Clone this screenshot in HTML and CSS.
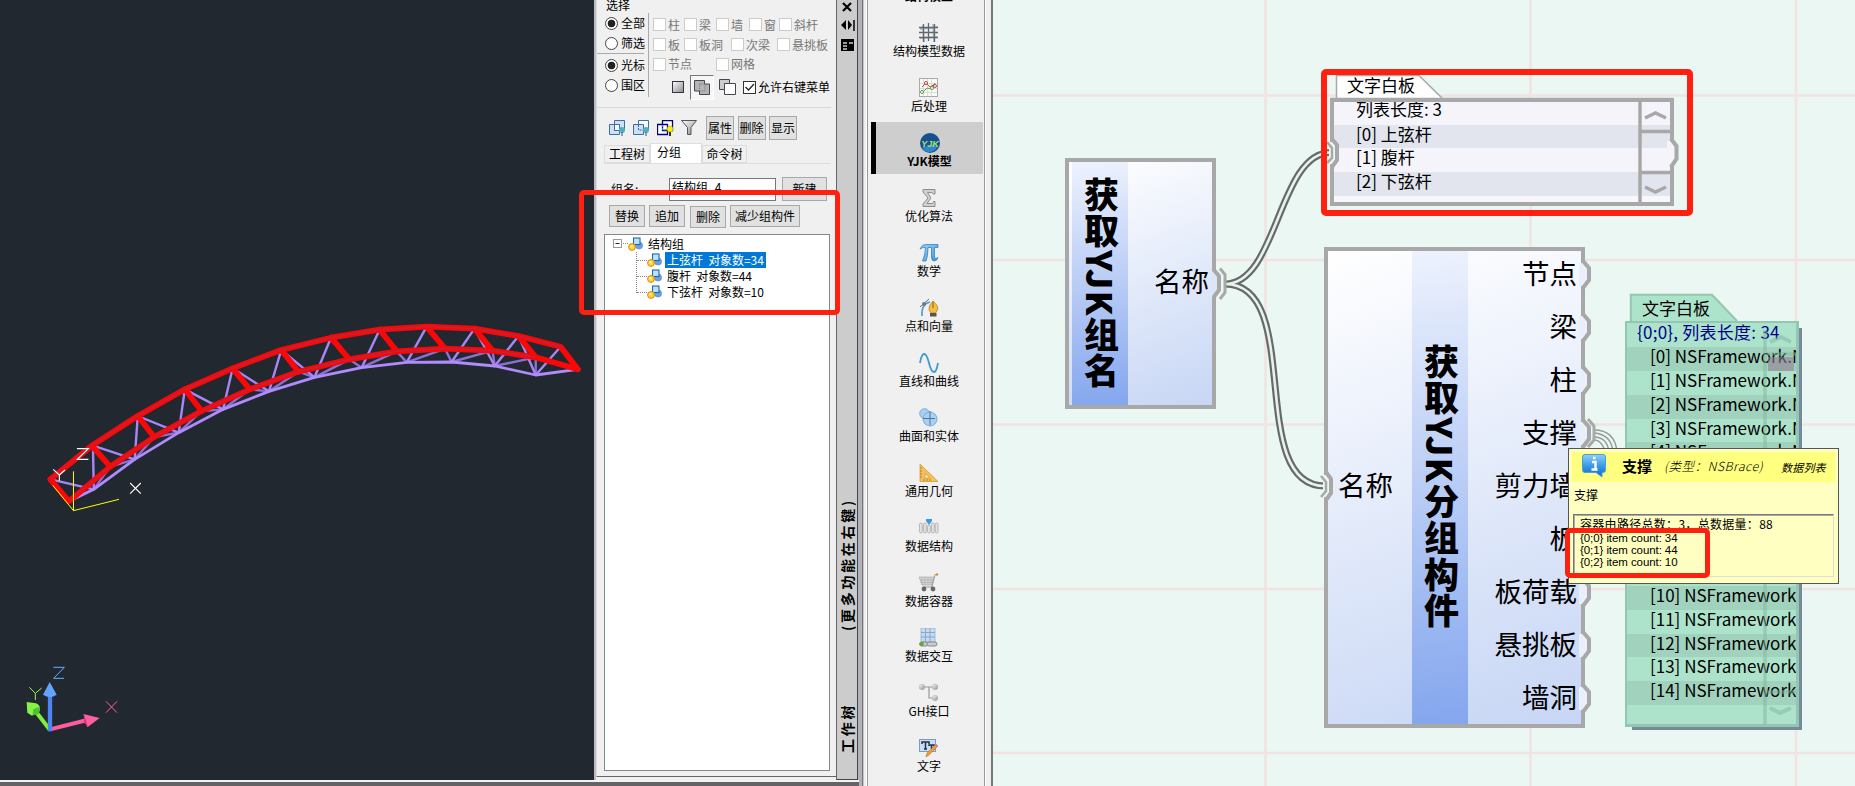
FILE: index.html
```html
<!DOCTYPE html>
<html lang="zh-CN">
<head>
<meta charset="utf-8">
<title>YJK</title>
<link rel="stylesheet" href="styles.css">
</head>
<body>
<svg width="0" height="0" class="defs">
  <defs>
    <linearGradient id="gBlue" x1="0" y1="0" x2="1" y2="1"><stop offset="0" stop-color="#a9d4f5"/><stop offset="1" stop-color="#3d8fd6"/></linearGradient>
    <linearGradient id="gGray" x1="0" y1="0" x2="1" y2="1"><stop offset="0" stop-color="#fff"/><stop offset="1" stop-color="#8a8a8a"/></linearGradient>
    <linearGradient id="gTip" x1="0" y1="0" x2="0" y2="1"><stop offset="0" stop-color="#8fd0f7"/><stop offset=".5" stop-color="#3a9be6"/><stop offset="1" stop-color="#1268c4"/></linearGradient>
    <symbol id="cube" viewBox="0 0 16 15">
      <circle cx="11" cy="8.500" r="3.600" fill="#6d9fe6" stroke="#4c7fcb" stroke-width=".6"/>
      <rect x="5.500" y="1" width="6.500" height="6.500" fill="#b8e3fa" stroke="#23689c" stroke-width="1.100"/>
      <circle cx="4" cy="10" r="3.400" fill="#ffd42a" stroke="#e2871c" stroke-width="1"/><circle cx="3.500" cy="9.300" r="1.300" fill="#fff3a0"/>
    </symbol>
  </defs>
</svg>
<div class="app">
  <section class="cad">
    <div class="viewport">
      <svg class="truss" width="600" height="240" viewBox="0 0 1568 720" preserveAspectRatio="none">
        <g fill="none" stroke="#a986f5" stroke-width="2.400" stroke-linejoin="round">
          <path stroke="#8c6fd6" d="M180 604L245 568L288 500L352 478L403 411L467 398L527 333L583 328L653 268L703 274L780 215L822 232L913 178L945 203L1037 154L1063 187L1163 146L1180 186L1287 152L1293 198L1400 172L1400 225"/>
          <path d="M132 538L245 568L243 437L352 478L360 348L467 398L483 268L583 328L608 205L703 274L735 150L822 232L865 113M992 89L945 203M1115 80L1063 187M1240 86L1180 186M1240 86L1293 198L1355 108M1355 108L1400 225L1465 140"/>
          <path stroke="#b08cfb" stroke-width="2.800" d="M180 604L245 568L352 478L467 398L583 328L703 274L822 232L945 203L1063 187L1180 186L1293 198L1400 225L1510 208"/>
        </g>
        <g fill="none" stroke="#fb0708" stroke-width="5.700" stroke-linejoin="round" stroke-linecap="round">
          <path d="M132 538L240 437L360 348L483 268L608 205L735 150L865 113L992 89L1115 80L1240 86L1355 108L1465 140L1510 208"/>
          <path d="M132 538L180 604L288 500L403 411L527 333L653 268L780 215L913 178L1037 154L1163 146L1287 152L1400 172L1510 208"/>
          <path d="M240 437L288 500M360 348L403 411M483 268L527 333M608 205L653 268M735 150L780 215M865 113L913 178M992 89L1037 154M1115 80L1163 146M1240 86L1287 152M1355 108L1400 172"/>
        </g>
        <path fill="none" stroke="#94395a" stroke-width=".9" d="M132 538L240 437L360 348L483 268L608 205L735 150L865 113L992 89L1115 80L1240 86L1355 108L1465 140M180 604L288 500L403 411L527 333L653 268L780 215L913 178L1037 154L1163 146L1287 152L1400 172"/>
        <path fill="none" stroke="#ff0" stroke-width="1" d="M192 514V632L311 598M192 632L138 556"/>
        <path fill="none" stroke="#fff" stroke-width="1.100" d="M201 446H231L202 478H231M139 508L155 525L170 510M155 525V542M340 549L368 581M368 549L340 581"/>
      </svg>
      <svg class="axes" width="200" height="140" viewBox="0 0 600 420">
        <path d="M150 268L262 240" stroke="#ff5ba0" stroke-width="12"/><path d="M250 222L299 234L262 262L256 244Z" fill="#ff5fa5"/><path d="M252 222L264 260L252 248Z" fill="#d9366f"/>
        <path d="M150 270L102 208" stroke="#7df03f" stroke-width="12"/><path d="M80 186L108 190Q124 196 118 214L96 227L82 218Z" fill="#86f446"/><path d="M100 208L119 200Q122 214 112 224L98 226Z" fill="#4fbf35"/>
        <path d="M150 274V160" stroke="#4c86f2" stroke-width="13"/><path d="M149 126L170 164Q150 178 129 164Z" fill="#62a4fb"/>
        <g fill="none" stroke-width="3"><path stroke="#63b1ff" d="M160 82H193L161 115H192"/><path stroke="#a4f04f" d="M88 142L106 160L125 144M106 160V180"/><path stroke="#ff5fa5" d="M318 184L351 218M351 184L318 218"/></g>
      </svg>
    </div>
    <div class="cadfoot"></div>
  </section>

  <aside class="panel">
    <div class="inner">
      <div class="legend"><span>选择</span></div>
      <div class="select">
        <div class="radios">
          <label class="radio"><i class="dot on"></i>全部</label>
          <label class="radio"><i class="dot"></i>筛选</label>
          <hr>
          <label class="radio"><i class="dot on"></i>光标</label>
          <label class="radio"><i class="dot"></i>围区</label>
        </div>
        <div class="checks">
          <div class="crow"><label class="w31"><i></i>柱</label><label class="w32"><i></i>梁</label><label class="w33"><i></i>墙</label><label class="w30"><i></i>窗</label><label><i></i>斜杆</label></div>
          <div class="crow"><label class="w31"><i></i>板</label><label class="w47"><i></i>板洞</label><label class="w46"><i></i>次梁</label><label><i></i>悬挑板</label></div>
          <div class="crow"><label class="w63"><i></i>节点</label><label><i></i>网格</label></div>
          <div class="modes">
            <svg width="12" height="12"><rect x=".5" y=".5" width="11" height="11" fill="url(#gGray)" stroke="#334"/></svg>
            <span class="pressed"><svg width="16" height="15"><path d="M.5.5h10v3.500h5v10.500h-10v-3.500h-5z" fill="#b4b4b4" stroke="#445"/><path d="M5.500 4v7H11V4z" fill="none" stroke="#777" stroke-dasharray="1 1"/></svg></span>
            <svg width="17" height="16"><path d="M.5.500h10v10h-10z" fill="#ccc" stroke="#445"/><path d="M5.500 4.500h11v11h-11z" fill="#fff" stroke="#445"/></svg>
            <label class="allow"><i><svg width="11" height="11"><path d="M1.500 5L4.500 8L10 2" fill="none" stroke="#222" stroke-width="1.300"/></svg></i>允许右键菜单</label>
          </div>
        </div>
      </div>
      <div class="tools">
        <svg width="17" height="16"><path d="M5.500.5h10v10h-10zM.5 4.500h10v10h-10z" fill="#cfe0f2" stroke="#3a6ea5"/><path d="M5.500 4.500h5v6h-5z" fill="#fff" stroke="#3a6ea5"/><circle cx="13" cy="10" r="3" fill="#4fb0c0"/><path d="M13 12v4" stroke="#447"/></svg>
        <svg width="17" height="16"><path d="M5.500.5h10v10h-10z" fill="#fff" stroke="#3a6ea5"/><path d="M.5 4.500h10v10h-10z" fill="#cfe0f2" stroke="#3a6ea5"/><path d="M5.500 5v5H10" fill="none" stroke="#3a6ea5" stroke-dasharray="2 1"/><circle cx="13" cy="10" r="3" fill="#4fb0c0"/><path d="M13 12v4" stroke="#447"/></svg>
        <svg width="17" height="16"><path d="M5.500.5h10v10h-10zM.5 4.500h10v10h-10z" fill="#fff" stroke="#000080" stroke-width="1.300"/><path d="M5.500 5v5H10" fill="none" stroke="#2a9a9a" stroke-dasharray="2 1"/><circle cx="13" cy="9" r="3" fill="#ffee00" stroke="#a90" stroke-width=".5"/><path d="M13 12v4" stroke="#333" stroke-width="2"/></svg>
        <svg width="17" height="17"><path d="M.5 1.500h15L10 8.500v7H6.500v-7z" fill="url(#gGray)" stroke="#555"/></svg>
        <button>属性</button><button>删除</button><button>显示</button>
      </div>
      <div class="tabs"><span>工程树</span><span class="cur">分组</span><span>命令树</span></div>
      <div class="page">
        <div class="name"><span>组名:</span><b>结构组_4</b><button>新建</button></div>
        <div class="acts"><button>替换</button><button>追加</button><button class="low">删除</button><button class="wide">减少组构件</button></div>
        <div class="tree">
          <div class="node root"><svg width="15" height="10"><rect x=".5" y=".5" width="8" height="8" fill="#fff" stroke="#999"/><path d="M2.500 4.500h4" stroke="#224"/><path d="M10 4.500h5" stroke="#888" stroke-dasharray="1 1"/></svg><svg width="16" height="15"><use href="#cube"/></svg><span>结构组</span></div>
          <div class="kids">
            <div class="node"><i></i><svg width="16" height="15"><use href="#cube"/></svg><span class="sel">上弦杆&nbsp; 对象数=34</span></div>
            <div class="node"><i></i><svg width="16" height="15"><use href="#cube"/></svg><span>腹杆&nbsp; 对象数=44</span></div>
            <div class="node"><i></i><svg width="16" height="15"><use href="#cube"/></svg><span>下弦杆&nbsp; 对象数=10</span></div>
          </div>
        </div>
      </div>
    </div>
  </aside>
  <div class="caption">
    <svg width="20" height="54"><path d="M6 3L14 11M14 3L6 11" stroke="#000" stroke-width="2.200"/><path d="M9 20v10l-5-5zM11 20v10l4-5z"/><path d="M17 20v11" stroke="#000" stroke-width="1.500"/><path d="M4 39h13v12H4z"/><path d="M6 43h4M6 46h4M6 49h4M12 43h4" stroke="#ccc" stroke-width="1.300"/></svg>
    <span class="side more">(更多功能在右键)</span>
    <span class="side work">工作树</span>
  </div>
  <div class="splitter"></div>

  <nav class="side-nav">
    <div class="item"><span class="ico"></span><b>结构模型</b></div>
    <div class="item"><svg class="ico" viewBox="0 0 20 20"><path d="M1 6l18-2M1 15l17-1M14 1l1 18M4 2l1 17" stroke="#6ea5dc" stroke-width="1.500" opacity=".8"/><path d="M0 4.500h19M0 9.500h19M0 14.500h19M4.500 1v18M9.500 0v18M15.500 1v18" stroke="#666" stroke-width="1.300"/></svg><span>结构模型数据</span></div>
    <div class="item"><svg class="ico" viewBox="0 0 20 20"><rect x=".5" y=".5" width="18" height="18" fill="#fafafa" stroke="#aaa"/><path d="M4.500 1v17M8.500 1v17M12.500 1v17M1 5.500h17M1 10.500h17M1 14.500h17" stroke="#ddd"/><path d="M3 9l4-4 4 4 5-3" fill="none" stroke="#c84040"/><path d="M3 15l5-5 5 1 3-6" fill="none" stroke="#58a83c"/><g fill="#fff"><circle cx="7" cy="5" r="1.500" stroke="#c84040"/><circle cx="16" cy="8" r="1.500" stroke="#c84040"/><circle cx="3" cy="14" r="1.500" stroke="#58a83c"/><circle cx="13" cy="10" r="1.500" stroke="#58a83c"/></g></svg><span>后处理</span></div>
    <div class="item active"><svg class="ico" viewBox="0 0 20 20"><circle cx="10" cy="10" r="10" fill="#17508e"/><path d="M2 15Q10 10 18 13Q14 20 8 19Q4 18 2 15Z" fill="#2f86c8"/><text x="10" y="13.500" text-anchor="middle" class="logo">YJK</text></svg><b>YJK模型</b></div>
    <div class="item"><svg class="ico" viewBox="0 0 20 20"><path d="M4 1.500h12v4.500h-2l-1-1.500H8.500L12 10l-4 5.500h5.500l1-2H16V18.500H4V16l5-6L4 4z" fill="#d0d0d0" stroke="#8e8e8e"/></svg><span>优化算法</span></div>
    <div class="item"><svg class="ico" viewBox="0 0 20 20"><path d="M1 6Q3 1 7 1.500H19V4.500H15.500V14Q16 16.500 19 14.500Q18 18 15 18Q12.500 18 12.500 14V4.500H9Q9 13 7 18H3.500Q6.500 11 6.500 4.500Q3.500 4 1 6Z" fill="url(#gBlue)" stroke="#2f86c0" stroke-width=".8"/></svg><span>数学</span></div>
    <div class="item"><svg class="ico" viewBox="0 0 20 20"><path d="M3 18Q2 6 11 4" fill="none" stroke="#479fd6" stroke-width="1.600"/><path d="M1 9L10 1" stroke="#666"/><circle cx="5" cy="6" r="2" fill="#777"/><path d="M14 3Q20 8 18.500 12L16.500 15H12L10 12Q9 8 14 3Z" fill="#f5bd42" stroke="#b8862c" stroke-width=".8"/><path d="M14 4v6" stroke="#865d1b"/><path d="M11 15h6.500v3.500H11z" fill="#555"/></svg><span>点和向量</span></div>
    <div class="item"><svg class="ico" viewBox="0 0 20 20"><path d="M1 10C3-2 7-2 10 10S17 22 19 10" fill="none" stroke="#3f9acb" stroke-width="1.800"/></svg><span>直线和曲线</span></div>
    <div class="item"><svg class="ico" viewBox="0 0 20 20"><circle cx="5.500" cy="5.500" r="4.800" fill="#a9d0f2" stroke="#78acd8"/><circle cx="11" cy="11" r="7" fill="#a9d0f2" stroke="#78acd8"/><path d="M11 3v14M4 10.500h12" stroke="#52779b"/></svg><span>曲面和实体</span></div>
    <div class="item"><svg class="ico" viewBox="0 0 20 20"><path d="M1 1L19 18.500H1zM6 10.500V15H11z" fill="#f3bf5b" fill-rule="evenodd" stroke="#d69a34" stroke-width=".8"/><path d="M1 5h2M1 8h2M1 11h2M1 14h2M5 18v-2M8 18v-2M11 18v-2" stroke="#9a6f25" stroke-width=".7"/></svg><span>通用几何</span></div>
    <div class="item"><svg class="ico" viewBox="0 0 20 20"><g fill="#e3e3e3" stroke="#aaa" stroke-width=".8"><rect x=".5" y="5" width="2.800" height="10" rx="1.400"/><rect x="4.500" y="5" width="2.800" height="10" rx="1.400"/><rect x="8.500" y="7" width="2.800" height="8" rx="1.400"/><rect x="12.500" y="5" width="2.800" height="10" rx="1.400"/><rect x="16.200" y="5" width="2.800" height="10" rx="1.400"/></g><path d="M7 1h6v2l-3 4-3-4z" fill="#379be5"/></svg><span>数据结构</span></div>
    <div class="item"><svg class="ico" viewBox="0 0 20 20"><path d="M0 4h15l-2 8H3z" fill="#d8d8d8" stroke="#aaa" stroke-width=".7"/><path d="M3 4v8M6 4v8M9 4v8M12 4v8M1 7h13M2 9.500h12" stroke="#aaa" stroke-width=".6"/><path d="M18 1.500h-2L13 14H4" fill="none" stroke="#999"/><circle cx="5" cy="16" r="2.400" fill="#666"/><circle cx="14" cy="16" r="2.400" fill="#666"/><circle cx="18" cy="1.500" r="1.200" fill="#d98a2c"/></svg><span>数据容器</span></div>
    <div class="item"><svg class="ico" viewBox="0 0 20 20"><path d="M2 0h14v14H2z" fill="#c5dbef" stroke="#8bacce" stroke-width=".7"/><path d="M2 4.500h14M2 9h14M6.500 0v14M11 0v14" stroke="#86a8c9"/><rect x="1" y="14" width="8" height="4" rx="2" fill="#ccc" stroke="#888"/><rect x="8" y="14" width="10" height="4" rx="2" fill="#ccc" stroke="#888"/><circle cx="2.500" cy="16" r="2.300" fill="#63a443"/></svg><span>数据交互</span></div>
    <div class="item"><svg class="ico" viewBox="0 0 20 20"><path d="M3 4h13M10 4v11h6" fill="none" stroke="#999" stroke-width="1.200"/><g fill="url(#gGray)" stroke="#aaa" stroke-width=".5"><circle cx="3" cy="4" r="2.800"/><circle cx="16" cy="4" r="2.800"/><circle cx="16" cy="15" r="2.800"/></g></svg><span>GH接口</span></div>
    <div class="item"><svg class="ico" viewBox="0 0 20 20"><rect x=".5" y="1.500" width="16" height="12" fill="#c9dff3" stroke="#7f9cb8"/><path d="M3 6V4h7v2M6.500 4v7M5 11h3M10 8V7h5v1M12.500 7v4" fill="none" stroke="#222f44" stroke-width="1.500"/><path d="M17 6l2 2-9 9-3 2 1-4z" fill="#f09a35" stroke="#a66a25" stroke-width=".5"/><path d="M17 6l2 2-1.500 1.500-2-2z" fill="#c583b8"/></svg><span>文字</span></div>
  </nav>

  <main class="canvas">
    <svg class="layer" width="862" height="786" viewBox="993 0 862 786">
      <path d="M1265.500 0V786M1530.500 0V786M1796 0V786M993 95.500H1855M993 260H1855M993 424.500H1855M993 589H1855M993 753H1855" stroke="#f1e3e2" stroke-width="2.500"/>
    </svg>

    <section class="gh first">
      <h2>获取YJK组名</h2>
      <div class="ports out"><span>名称</span></div>
    </section>
    <section class="gh second">
      <div class="ports in"><span>名称</span></div>
      <h2>获取YJK分组构件</h2>
      <div class="ports out"><span>节点</span><span>梁</span><span>柱</span><span>支撑</span><span>剪力墙</span><span>板</span><span>板荷载</span><span>悬挑板</span><span>墙洞</span></div>
    </section>
    <section class="board plain">
      <p>列表长度: 3</p><p>[0] 上弦杆</p><p>[1] 腹杆</p><p>[2] 下弦杆</p>
    </section>
    <svg class="layer" width="862" height="786" viewBox="993 0 862 786">
      <path d="M1632 328H1802V730H1632z" fill="#77899a"/>
      <path d="M1630.800 321V294.800H1712L1737 321" fill="#aee3cb" stroke="#92c7b1" stroke-width="2"/>
    </svg>
    <section class="board green">
      <p class="head">{0;0}, 列表长度: 34</p><p>[0] NSFramework.N</p><p>[1] NSFramework.N</p><p>[2] NSFramework.N</p><p>[3] NSFramework.N</p><p>[4] NSFramework.N</p><p></p><p></p><p></p><p></p><p></p><p>[10] NSFramework</p><p>[11] NSFramework</p><p>[12] NSFramework</p><p>[13] NSFramework</p><p>[14] NSFramework</p>
    </section>

    <svg class="layer" width="862" height="786" viewBox="993 0 862 786">
      <g fill="none">
        <g stroke="#666b69" stroke-width="7"><path d="M1225 284C1278 284 1278 152.500 1331 152.500M1225 284C1305 284 1245 486 1325 486"/></g>
        <g stroke="#e9f1ee" stroke-width="2.600"><path d="M1225 284C1278 284 1278 152.500 1331 152.500M1225 284C1305 284 1245 486 1325 486"/></g>
        <g stroke="#969b99" stroke-width="1.400"><path d="M1594 430C1611 430 1616 441 1617 452M1594 433C1607 434 1612 441 1613 452M1594 437C1604 437 1608 444 1609 452M1594 440C1600 440 1604 446 1605 452"/></g>
      </g>
      <g stroke="#a8a8a8" stroke-width="4" fill="none">
        <path d="M1211 271H1215L1219 277V290L1215 297H1211z" fill="#dde6f8" stroke="none"/>
        <path d="M1213.500 269.500L1219 276V290L1213.500 297.500"/>
        <path d="M1220 268.500L1225 274.500V292.500L1220 299" stroke-width="3"/>
        <g id="bump"><path d="M1579 263H1584L1589 269V280L1584 286H1579z" fill="#e9effb" stroke="none"/><path d="M1583 261L1589 268V280L1583 288"/></g>
        <use href="#bump" y="53"/><use href="#bump" y="106"/><use href="#bump" y="159"/><use href="#bump" y="212"/><use href="#bump" y="265"/><use href="#bump" y="318"/><use href="#bump" y="371"/><use href="#bump" y="424"/>
        <path d="M1588 419L1594 426V440L1588 447" stroke-width="3"/>
        <path d="M1323 475H1327L1331 480V492L1327 497H1323z" fill="#ebf7f3" stroke="none"/>
        <path d="M1326 472L1331 479V493L1326 500"/><path d="M1321 476L1326 482V491L1321 497" stroke-width="2.500"/>
        <path d="M1329 142H1333L1337 147V159L1333 164H1329z" fill="#ebf7f3" stroke="none"/>
        <path d="M1332 139L1337 145V160L1332 167"/><path d="M1327 142L1332 148V158L1327 163" stroke-width="2.500"/>
        <path d="M1667 141H1672L1676 147V159L1672 165H1667z" fill="#f5f4fb" stroke="none"/>
        <path d="M1671 139L1676.500 146V159L1671 167"/>
      </g>
      <path d="M1336.500 98V75.500H1419L1442 98" fill="#fff" stroke="#a8a8a8" stroke-width="1.500"/><path d="M1331 99.700H1673" stroke="#a8a8a8" stroke-width="4"/>
      <g fill="none" stroke="#a8a8a8" stroke-width="3.500"><path d="M1640 101V204M1639 131.500H1671M1639 172.500H1671"/><path d="M1645 118L1655.500 113L1666 118M1645 187L1655.500 192L1666 187"/></g>
      <g fill="none" stroke="#7fb59e" stroke-opacity=".5" stroke-width="3.500"><path d="M1765 330V725M1767 354H1797M1767 692H1797"/><path d="M1770 342L1781 337L1791 342M1770 708L1780 713L1791 708" stroke-width="4"/></g>
      <path d="M1768 357h26v14h-26z" fill="#957e91" opacity=".6"/>
    </svg>
    <span class="tab t1">文字白板</span>
    <span class="tab t2">文字白板</span>

    <div class="tip">
      <header>
        <svg width="24" height="24"><path d="M3 .5h18q2.500 0 2.500 2.500v13q0 2.500-2.500 2.500h-1V23l-6-4.500H3Q.5 18.500.5 16V3Q.5.5 3 .5z" fill="url(#gTip)" stroke="#4b9ddc"/><path d="M10 8h3.500v7M9.500 15.500h6M11 4h2.500" stroke="#fff" stroke-width="2.400" fill="none"/></svg>
        <b>支撑</b><i>(类型：NSBrace)</i><em>数据列表</em>
      </header>
      <p class="sub">支撑</p>
      <div class="info"><p>容器由路径总数：3，总数据量：88</p><p class="cnt">{0;0} item count: 34</p><p class="cnt">{0;1} item count: 44</p><p class="cnt">{0;2} item count: 10</p></div>
    </div>
  </main>
</div>
<div class="mark m1"></div>
<div class="mark m2"></div>
<div class="mark m3"></div>
</body>
</html>
```
FILE: styles.css
```css
* { box-sizing: border-box; }
body { margin: 0; width: 1855px; height: 786px; overflow: hidden; position: relative; font: 12px/16px "Noto Sans CJK SC", sans-serif; color: #000; background: #f0f0f0; }
p, h2 { margin: 0; }
svg { flex: none; }
.defs { position: absolute; }
.app { display: flex; height: 786px; }

/* CAD view */
.cad { width: 594px; flex: none; display: flex; flex-direction: column; }
.viewport { height: 780px; background: #222830; overflow: hidden; display: flex; flex-direction: column; padding-top: 300px; }
.truss path { vector-effect: non-scaling-stroke; }
.axes { margin-top: 100px; }
.cadfoot { height: 6px; border-top: 2px solid #f4f4f4; background: #656366; width: 859px; z-index: 2; }

/* tool panel */
.panel { width: 243px; flex: none; height: 780px; background: #f0f0f0; border-left: 2px solid #bbb; border-right: 1px solid #666; overflow: hidden; }
.inner { border-left: 1px solid #ddd; border-bottom: 1px solid #666; height: 777px; }
.legend { height: 13px; padding-left: 9px; line-height: 9px; }
.select { height: 95px; margin-right: 5px; border-bottom: 1px solid #d8d8d8; display: flex; }
.radios { width: 52px; flex: none; border-right: 1px solid #aaa; height: 84px; }
.radios hr { margin: 0 4px 1px 0; border: 0; border-top: 1px solid #aaa; }
.radio { display: flex; align-items: center; gap: 3px; height: 20px; padding-left: 8px; white-space: nowrap; }
.dot { width: 13px; height: 13px; border: 1px solid #444; border-radius: 50%; background: #fff; flex: none; }
.dot.on { background: radial-gradient(circle, #222 0 3.5px, #fff 4.2px); }
.checks { padding: 2px 0 0 4px; color: #777; white-space: nowrap; }
.crow { display: flex; height: 19.700px; }
.crow label, .allow { display: flex; align-items: center; gap: 2px; flex: none; }
.crow i, .allow i { width: 13px; height: 13px; border: 1px solid #ccc; background: #fff; flex: none; display: flex; }
.w30 { width: 30px; } .w31 { width: 31px; } .w32 { width: 32px; } .w33 { width: 33px; } .w46 { width: 46px; } .w47 { width: 47px; } .w63 { width: 63px; }
.modes { display: flex; align-items: center; padding-left: 19px; height: 26px; color: #000; }
.pressed { width: 24px; height: 25px; margin: 0 5px 0 6px; border: 1px solid #777; border-right-color: #fff; border-bottom-color: #fff; display: grid; place-items: center; background: #f6f6f6; }
.allow { margin-left: 7px; } .allow i { border-color: #333; }
.tools { display: flex; align-items: center; height: 39px; padding-left: 12px; gap: 8px; }
button { font: inherit; border: 1px solid #a8a8a8; background: #e1e1e1; padding: 0; color: #000; flex: none; }
.tools button { width: 28px; height: 24px; margin-right: -4.500px; }
.tools svg { margin-right: -1px; }
.tools svg:nth-of-type(4) { margin-right: 0; }
.tabs { display: flex; align-items: flex-end; height: 17px; margin: 0 6px 0 7px; border-bottom: 1px solid #ddd; }
.tabs span { border: 1px solid #ddd; width: 46px; height: 18px; text-align: center; }
.tabs .cur { width: 52px; height: 20px; background: #fff; border-bottom: 0; padding-right: 14px; }
.tabs span:last-child { width: 45px; }
.page { padding: 12px 7px 0 7px; }
.name { display: flex; align-items: center; height: 26px; padding-left: 7px; }
.name span { width: 58px; }
.name b { width: 107px; height: 23px; font-weight: 400; background: #fff; border: 1px solid #777; padding-left: 2px; }
.name button { width: 45px; height: 24px; margin-left: 6px; }
.acts { display: flex; gap: 4px; height: 24px; margin: 3px 0 5px 5px; }
.acts button { width: 36px; height: 22px; }
.acts .low { margin-top: 1px; margin-left: 1px; }
.acts .wide { width: 70px; }
.tree { background: #fff; border: 1px solid #828790; height: 537px; margin-right: -1px; padding: 1px 0 0 8px; }
.node { display: flex; align-items: center; height: 16px; white-space: nowrap; }
.root span { padding-left: 4px; }
.kids { border-left: 1px dotted #888; margin-left: 23px; height: 41px; }
.kids i { width: 10px; border-top: 1px dotted #888; }
.node .sel { background: #0078d7; color: #fff; }
.kids span { padding: 0 2px; margin-left: 2px; letter-spacing: -.05px; }
.caption { width: 21px; flex: none; height: 780px; background: #ccc; border-right: 1px solid #444; border-bottom: 1px solid #444; display: flex; flex-direction: column; align-items: center; }
.side { writing-mode: vertical-rl; text-orientation: sideways; transform: rotate(180deg); font-weight: 700; font-size: 14px; line-height: 20px; letter-spacing: 2.700px; white-space: nowrap; }
.more { margin-top: 441px; height: 136px; }
.work { margin-top: 70px; height: 52px; }
.splitter { width: 9px; flex: none; background: linear-gradient(90deg, #b2b2ba 0 4px, #777 4px 5px, #c6c6c6 5px 6px, #eee 6px); }

/* category list */
.side-nav { width: 118px; flex: none; height: 786px; overflow: hidden; border-left: 1px solid #999; border-right: 1px solid #999; padding-left: 3px; display: flex; flex-direction: column; margin-right: 8px; outline: 1px solid #fff; }
.item { width: 112px; height: 52px; flex: none; margin-bottom: 3px; padding-top: 11px; display: flex; flex-direction: column; align-items: center; padding-left: 4px; border-left: 0; }
.item:first-child { margin-top: -43px; }
.item span:not(.ico), .item b { margin-top: -.5px; }
.ico { width: 20px; height: 20px; flex: none; }
.active { background: #cecece; border-left: 5px solid #000; padding-left: 0; }
.logo { font: italic 700 9px "Liberation Sans", sans-serif; fill: #a5e36a; }

/* node canvas */
.canvas { position: relative; flex: 1; height: 786px; background: #ebf7f3; overflow: hidden; box-shadow: -2px 0 #777; }
.layer { position: absolute; left: 0; top: 0; }
.gh { position: absolute; border: 4px solid #a8a8a8; background: linear-gradient(160deg, #fff, #c7d6f5); display: flex; }
.gh h2 { width: 56px; flex: none; writing-mode: vertical-rl; font-size: 35px; font-weight: 900; line-height: 54px; letter-spacing: 1.500px; text-align: center; background: linear-gradient(175deg, #edf2fd, #84a6ee); white-space: nowrap; }
.first { left: 72px; top: 158px; width: 151px; height: 251px; padding-left: 3px; }
.second { left: 331px; top: 247px; width: 261px; height: 481px; }
.ports { display: flex; flex-direction: column; justify-content: center; font-size: 27.500px; line-height: 53px; white-space: nowrap; flex: 1; padding-bottom: 7px; }
.out { align-items: flex-end; padding-right: 4px; }
.first .out { padding-right: 3px; }
.in { flex: none; width: 84px; padding-left: 10px; }
.board { position: absolute; border: 4px solid #a8a8a8; font-size: 17px; overflow: hidden; white-space: nowrap; }
.board p { height: 23.900px; flex: none; }
.plain { left: 337px; top: 98px; width: 344px; height: 108px; background: #f7f8fe; }
.plain p { background: #f5f4fb; padding-left: 22px; line-height: 17px; }
.plain p:nth-child(even) { background: #e2e5ed; }
.plain p:first-child { height: 22.500px; line-height: 14px; }
.green { left: 632px; top: 321px; width: 174px; height: 406px; background: #aee3cb; border: 2px solid #92c7b1; border-right-width: 3px; border-bottom-width: 3px; }
.green p { padding-left: 23px; line-height: 18px; }
.green p:nth-child(even) { background: #a1d2bd; }
.green .head { padding-left: 10px; color: #00008b; letter-spacing: .25px; }
.tab { position: absolute; font-size: 17px; line-height: 22px; }
.t1 { left: 354px; top: 74px; }
.t2 { left: 649px; top: 297px; }
.tip { position: absolute; left: 575px; top: 448px; width: 271px; height: 136px; background: #ffffc1; border: 1px solid #555; padding: 3px; }
.tip header { background: #ffff80; height: 30px; display: flex; align-items: center; padding-left: 10px; white-space: nowrap; }
.tip header svg { margin-top: -3px; }
.tip b { font-size: 15px; margin-left: 16px; width: 42px; margin-top: -2px; }
.tip i { font: italic 300 12.500px "Noto Sans CJK SC", sans-serif; width: 117px; margin-top: -3px; letter-spacing: .5px; }
.tip em { font-size: 11px; letter-spacing: .2px; }
.sub { padding: 5px 2px 0; height: 32px; }
.info { border: 1px solid #777; border-right-color: #ddd; border-bottom-color: #ddd; height: 63px; margin: 0 1px; padding: 1px 6px; box-shadow: inset 1px 1px #aaa; white-space: nowrap; }
.info p:first-child { height: 16px; letter-spacing: .3px; }
.cnt { font: 11.500px/12px "Liberation Sans", sans-serif; letter-spacing: -.08px; }
.mark { position: absolute; border: 6px solid #ff2010; border-radius: 5px; }
.m1 { left: 579px; top: 190px; width: 261px; height: 125px; border-width: 5.500px; }
.m2 { left: 1321px; top: 69px; width: 372px; height: 147px; }
.m3 { left: 1565px; top: 528px; width: 145px; height: 50px; border-width: 5px; }
```
